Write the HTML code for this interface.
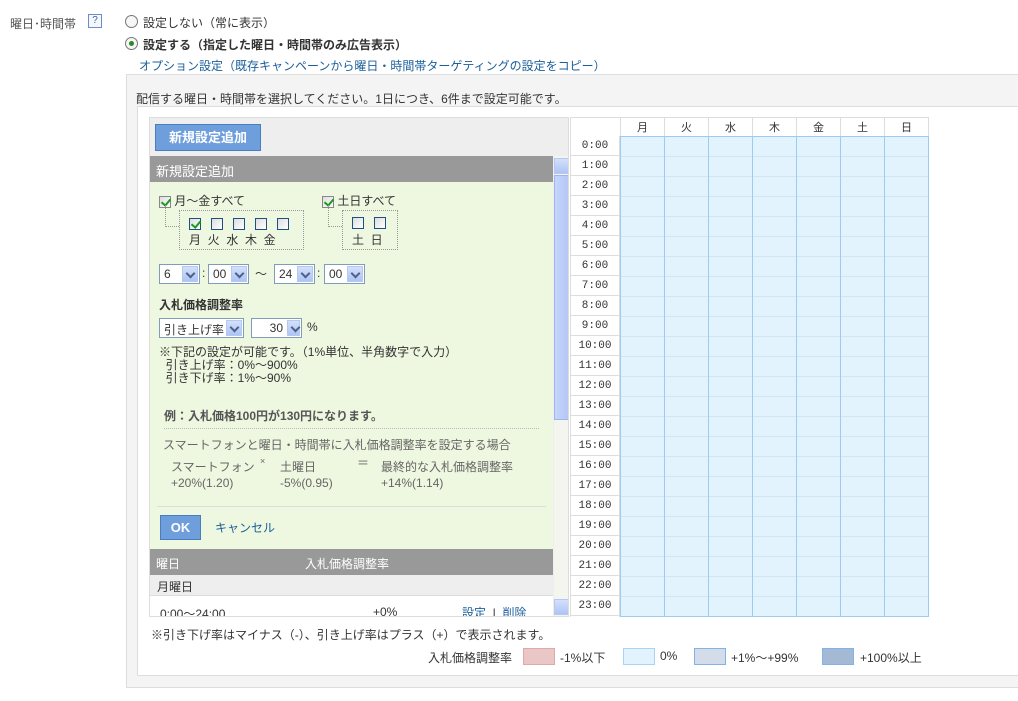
<!DOCTYPE html>
<html><head><meta charset="utf-8"><style>
*{margin:0;padding:0;box-sizing:border-box}
body{width:1018px;height:701px;background:#fff;font-family:"Liberation Sans","Noto Sans CJK JP",sans-serif;font-size:12px;color:#333;position:relative;overflow:hidden}
.a{position:absolute;white-space:nowrap}
.lnk{color:#1a5e9a}
.cb{display:inline-block;width:12px;height:12px;border:1px solid #1c5180;background:linear-gradient(135deg,#ddd,#fff);vertical-align:middle;position:relative}
.cbg{border-color:#888}
.ck::after{content:"";position:absolute;left:3px;top:0px;width:4px;height:7px;border:solid #1a9a1a;border-width:0 2px 2px 0;transform:rotate(40deg)}
.sel{position:absolute;height:20px;border:1px solid #7f9db9;background:#fff;font-size:12px;padding:2px 4px}
.sel i{position:absolute;right:1px;top:1px;width:16px;height:16px;background:linear-gradient(#d4e0fb,#aec4f5);border:1px solid #b5c8f0}
.sel i::after{content:"";position:absolute;left:4px;top:3px;width:5px;height:5px;border:solid #4d6185;border-width:0 2px 2px 0;transform:rotate(45deg)}
.btn{position:absolute;background:#6e9edb;border:1px solid #4a7cc0;color:#fff;font-weight:bold;text-align:center}
table{border-collapse:collapse}
</style></head><body>
<div class="a" style="left:10px;top:15px;color:#555">曜日･時間帯</div>
<div class="a" style="left:88px;top:14px;width:14px;height:14px;border:1px solid #6b8cc4;color:#3d63a8;font-size:10px;text-align:center;line-height:12px;background:#f4f7fc">?</div>
<div class="a" style="left:125px;top:15px;width:13px;height:13px;border:1px solid #777;border-radius:50%;background:#f6f6f6"></div>
<div class="a" style="left:143px;top:14px">設定しない（常に表示）</div>
<div class="a" style="left:125px;top:37px;width:13px;height:13px;border:1px solid #777;border-radius:50%;background:#f6f6f6"><div style="position:absolute;left:3px;top:3px;width:5px;height:5px;border-radius:50%;background:#2a8a2a"></div></div>
<div class="a" style="left:143px;top:36px;font-weight:bold">設定する（指定した曜日・時間帯のみ広告表示）</div>
<div class="a lnk" style="left:139px;top:57px">オプション設定（既存キャンペーンから曜日・時間帯ターゲティングの設定をコピー）</div>

<div class="a" style="left:126px;top:74px;width:900px;height:614px;background:#f4f4f4;border:1px solid #ddd"></div>
<div class="a" style="left:136px;top:90px">配信する曜日・時間帯を選択してください。1日につき、6件まで設定可能です。</div>
<div class="a" style="left:137px;top:106px;width:890px;height:570px;background:#fff;border:1px solid #ddd"></div>

<!-- left panel -->
<div class="a" style="left:149px;top:117px;width:420px;height:500px;background:#eee;border:1px solid #ddd;overflow:hidden">
 <div class="btn" style="left:5px;top:6px;width:106px;height:27px;line-height:25px;font-size:13px">新規設定追加</div>
 <div class="a" style="left:0;top:38px;width:403px;height:26px;background:#999;color:#fff;font-size:13px;padding:5px 6px">新規設定追加</div>
 <div class="a" style="left:0;top:64px;width:403px;height:367px;background:#eef7e0"></div>
 <div class="a" style="left:9px;top:74px"><span class="cb cbg ck"></span> 月～金すべて</div>
 <div class="a" style="left:172px;top:74px"><span class="cb cbg ck"></span> 土日すべて</div>
 <div class="a" style="left:15px;top:87px;width:14px;height:22px;border-left:1px dotted #999;border-bottom:1px dotted #999"></div>
 <div class="a" style="left:29px;top:92px;width:125px;height:40px;border:1px dotted #999"></div>
 <div class="a" style="left:178px;top:87px;width:14px;height:22px;border-left:1px dotted #999;border-bottom:1px dotted #999"></div>
 <div class="a" style="left:192px;top:92px;width:56px;height:40px;border:1px dotted #999"></div>
 <div class="a" style="left:39px;top:97px;font-size:12px;line-height:17px;text-align:center">
  <span class="cb ck"></span>&nbsp;&nbsp;&nbsp;<span class="cb"></span>&nbsp;&nbsp;&nbsp;<span class="cb"></span>&nbsp;&nbsp;&nbsp;<span class="cb"></span>&nbsp;&nbsp;&nbsp;<span class="cb"></span></div>
 <div class="a" style="left:39px;top:113px;letter-spacing:0">月&nbsp;&nbsp;火&nbsp;&nbsp;水&nbsp;&nbsp;木&nbsp;&nbsp;金</div>
 <div class="a" style="left:202px;top:97px"><span class="cb"></span>&nbsp;&nbsp;&nbsp;<span class="cb"></span></div>
 <div class="a" style="left:202px;top:113px">土&nbsp;&nbsp;日</div>
 <div class="sel" style="left:9px;top:146px;width:41px">6<i></i></div>
 <div class="a" style="left:52px;top:148px">:</div>
 <div class="sel" style="left:58px;top:146px;width:41px">00<i></i></div>
 <div class="a" style="left:105px;top:147px">～</div>
 <div class="sel" style="left:124px;top:146px;width:41px">24<i></i></div>
 <div class="a" style="left:167px;top:148px">:</div>
 <div class="sel" style="left:174px;top:146px;width:41px">00<i></i></div>
 <div class="a" style="left:9px;top:178px;font-weight:bold;font-size:12px">入札価格調整率</div>
 <div class="sel" style="left:9px;top:200px;width:85px">引き上げ率<i></i></div>
 <div class="sel" style="left:101px;top:200px;width:51px;text-align:right;padding-right:18px">30<i style="width:13px"></i></div>
 <div class="a" style="left:157px;top:202px">%</div>
 <div class="a" style="left:9px;top:228px;line-height:13px">※下記の設定が可能です。（1%単位、半角数字で入力）<br>&nbsp;&nbsp;引き上げ率：0%～900%<br>&nbsp;&nbsp;引き下げ率：1%～90%</div>
 <div class="a" style="left:14px;top:289px;font-weight:bold;color:#555">例：入札価格100円が130円になります。</div>
 <div class="a" style="left:14px;top:310px;width:375px;border-top:1px dotted #bbb"></div>
 <div class="a" style="left:13px;top:318px;color:#666">スマートフォンと曜日・時間帯に入札価格調整率を設定する場合</div>
 <div class="a" style="left:21px;top:340px;color:#666">スマートフォン</div>
 <div class="a" style="left:110px;top:338px;color:#666;font-size:9px">×</div>
 <div class="a" style="left:130px;top:340px;color:#666">土曜日</div>
 <div class="a" style="left:207px;top:336px;color:#666">＝</div>
 <div class="a" style="left:231px;top:340px;color:#666">最終的な入札価格調整率</div>
 <div class="a" style="left:21px;top:358px;color:#666">+20%(1.20)</div>
 <div class="a" style="left:130px;top:358px;color:#666">-5%(0.95)</div>
 <div class="a" style="left:231px;top:358px;color:#666">+14%(1.14)</div>
 <div class="a" style="left:7px;top:388px;width:389px;border-top:1px solid #ddd"></div>
 <div class="btn" style="left:10px;top:397px;width:41px;height:25px;line-height:23px;font-size:13px">OK</div>
 <div class="a lnk" style="left:65px;top:401px">キャンセル</div>
 <div class="a" style="left:0;top:431px;width:403px;height:26px;background:#999;color:#fff;padding:6px 6px">曜日<span style="position:absolute;left:155px">入札価格調整率</span></div>
 <div class="a" style="left:0;top:457px;width:403px;height:21px;background:#eee;border-bottom:1px solid #ddd;padding:3px 7px">月曜日</div>
 <div class="a" style="left:0;top:478px;width:403px;height:30px;background:#fff"></div>
 <div class="a" style="left:10px;top:487px">0:00～24:00</div>
 <div class="a" style="left:223px;top:487px">+0%</div>
 <div class="a lnk" style="left:312px;top:486px">設定&nbsp;&nbsp;<span style="color:#333">|</span>&nbsp;&nbsp;削除</div>
 <div class="a" style="left:403px;top:38px;width:16px;height:462px;background:#f5f5f0;border-left:1px solid #eee"></div>
 <div class="a" style="left:404px;top:40px;width:15px;height:16px;background:linear-gradient(#d4e0fb,#aec4f5);border:1px solid #b5c8f0"></div>
 <div class="a" style="left:404px;top:57px;width:15px;height:245px;background:linear-gradient(90deg,#c6d6fb,#b3c7f6);border:1px solid #9fb6ec"></div>
 <div class="a" style="left:404px;top:481px;width:15px;height:16px;background:linear-gradient(#d4e0fb,#aec4f5);border:1px solid #b5c8f0"></div>
</div>

<!-- grid -->
<div class="a" style="left:570px;top:117px">
<table style="font-size:11px;font-family:'Liberation Mono','Noto Sans CJK JP',monospace">
<tr style="height:19px"><td style="width:50px;border:1px solid #ddd"></td>
<td style="width:44px;border:1px solid #ddd;text-align:center">月</td><td style="width:44px;border:1px solid #ddd;text-align:center">火</td><td style="width:44px;border:1px solid #ddd;text-align:center">水</td><td style="width:44px;border:1px solid #ddd;text-align:center">木</td><td style="width:44px;border:1px solid #ddd;text-align:center">金</td><td style="width:44px;border:1px solid #ddd;text-align:center">土</td><td style="width:44px;border:1px solid #ddd;text-align:center">日</td></tr>
</table>
<div id="g"></div>
</div>
<div class="a" style="left:570px;top:136px;width:359px;height:481px">
 <div style="position:absolute;left:0;top:0;width:50px;height:481px;border-left:1px solid #ddd;border-right:1px solid #ddd;background:repeating-linear-gradient(#fff 0 19px,#ddd 19px 20px);font-family:'Liberation Mono',monospace;font-size:11px;line-height:20px;text-align:center;white-space:normal">0:00 1:00 2:00 3:00 4:00 5:00 6:00 7:00 8:00 9:00 10:00 11:00 12:00 13:00 14:00 15:00 16:00 17:00 18:00 19:00 20:00 21:00 22:00 23:00</div>
 <div style="position:absolute;left:50px;top:0;width:309px;height:481px;border:1px solid #9ccbf5;background:repeating-linear-gradient(90deg,transparent 0 43px,#9ccbf5 43px 44px),repeating-linear-gradient(#e2f3fd 0 19px,#cfe6f6 19px 20px)"></div>
</div>
<div class="a" style="left:151px;top:626px">※引き下げ率はマイナス（-）、引き上げ率はプラス（+）で表示されます。</div>
<div class="a" style="left:428px;top:649px">入札価格調整率</div>
<div class="a" style="left:523px;top:648px;width:32px;height:17px;background:#ebc6c6;border:1px solid #e0a8a8"></div>
<div class="a" style="left:560px;top:649px">-1%以下</div>
<div class="a" style="left:623px;top:648px;width:32px;height:17px;background:#e2f3fd;border:1px solid #a8d4f8"></div>
<div class="a" style="left:660px;top:649px">0%</div>
<div class="a" style="left:694px;top:648px;width:32px;height:17px;background:#d3dce8;border:1px solid #7fb3ea"></div>
<div class="a" style="left:731px;top:649px">+1%～+99%</div>
<div class="a" style="left:822px;top:648px;width:32px;height:17px;background:#a4b9d4;border:1px solid #7fb3ea"></div>
<div class="a" style="left:860px;top:649px">+100%以上</div>
</body></html>
